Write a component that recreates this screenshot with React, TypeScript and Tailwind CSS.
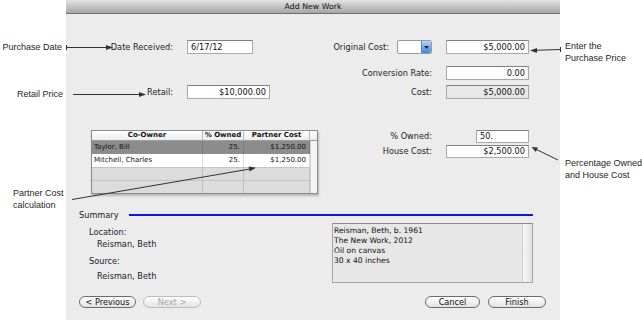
const ui = "font-['DejaVu_Sans',sans-serif]";
const note = "font-['Liberation_Sans',Arial,sans-serif] text-[9px] leading-[12px] text-[#1e1e1e] whitespace-nowrap";

function Label({ children }: { children: React.ReactNode }) {
  return <div className="text-right text-[8.2px] leading-none text-[#1c1c1c]">{children}</div>;
}

function Field({
  value,
  w = "w-[83px]",
  h = "h-[14px]",
  left,
  muted,
  className = "",
}: {
  value: string;
  w?: string;
  h?: string;
  left?: boolean;
  muted?: boolean;
  className?: string;
}) {
  return (
    <div
      className={`${w} ${h} ${className} flex items-center border border-[#a8a8a8] border-t-[#7f7f7f] px-[3px] text-[8.2px] leading-none text-[#111] ${
        muted ? "bg-[#e8e8e8]" : "bg-white"
      } ${left ? "justify-start" : "justify-end"}`}
    >
      {value}
    </div>
  );
}

function Popup() {
  return (
    <div className="flex h-[14px] w-[35px] overflow-hidden rounded-[2px] border border-[#9a9a9a] bg-white">
      <div className="flex-1" />
      <div className="flex w-[10px] items-center justify-center rounded-r-[2px] border-l border-[#5a82c0] bg-linear-to-b from-[#b3d3fa] to-[#3f84e4]">
        <svg width="5" height="3" viewBox="0 0 5 3">
          <path d="M0 0h5L2.5 3z" fill="#15233f" />
        </svg>
      </div>
    </div>
  );
}

function Btn({ children, w, disabled }: { children: React.ReactNode; w: string; disabled?: boolean }) {
  return (
    <div
      className={`${w} flex h-[12px] items-center justify-center rounded-full border bg-linear-to-b from-white to-[#e2e2e2] text-[8.2px] leading-none ${
        disabled ? "border-[#bdbdbd] text-[#a8a8a8]" : "border-[#6c6c6c] text-[#111]"
      }`}
    >
      {children}
    </div>
  );
}

const owners = [
  { name: "Taylor, Bill", owned: "25.", cost: "$1,250.00" },
  { name: "Mitchell, Charles", owned: "25.", cost: "$1,250.00" },
];

function Table() {
  return (
    <div className="ml-[25px] mt-[31px] w-[227px] border border-[#8a8a8a] bg-[#dcdcdc] text-[7px] leading-none text-[#111] shadow-[1px_2px_2px_rgba(0,0,0,0.22)]">
      <div className="flex h-[10px] border-b border-[#a0a0a0] bg-linear-to-b from-white to-[#ebebeb] font-bold">
        <div className="flex w-[111px] items-center justify-center border-r border-[#b8b8b8]">Co-Owner</div>
        <div className="flex w-[41px] items-center justify-center border-r border-[#b8b8b8]">% Owned</div>
        <div className="flex w-[66px] items-center justify-center border-r border-[#b8b8b8]">Partner Cost</div>
        <div className="flex-1" />
      </div>
      <div className="flex">
        <div className="w-[218px]">
          {owners.map((o, i) => (
            <div key={o.name} className={`flex h-[13px] ${i === 0 ? "bg-[#8c8c8c]" : "bg-white"}`}>
              <div className={`flex w-[111px] items-center pl-[2px] border-r ${i === 0 ? "border-[#7c7c7c]" : "border-[#dadada]"}`}>
                {o.name}
              </div>
              <div className={`flex w-[41px] items-center justify-end pr-[3px] border-r ${i === 0 ? "border-[#7c7c7c]" : "border-[#dadada]"}`}>
                {o.owned}
              </div>
              <div className={`flex w-[66px] items-center justify-end pr-[3px] border-r ${i === 0 ? "border-[#7c7c7c]" : "border-[#dadada]"}`}>
                {o.cost}
              </div>
            </div>
          ))}
          {[0, 1].map((k) => (
            <div key={k} className="flex h-[13px] border-t border-[#c4c4c4] bg-[#dcdcdc]">
              <div className="w-[111px] border-r border-[#c0c0c0]" />
              <div className="w-[41px] border-r border-[#c0c0c0]" />
              <div className="w-[66px] border-r border-[#c0c0c0]" />
            </div>
          ))}
        </div>
        <div className="flex-1 border-l border-[#cfcfcf] bg-[#f5f5f5]" />
      </div>
    </div>
  );
}

function Arrows() {
  const c = "#333";
  return (
    <svg className="pointer-events-none absolute left-0 top-0" width="642" height="320" viewBox="0 0 642 320">
      <g stroke={c} strokeWidth="1" fill="none">
        <path d="M66.5 45v5M66.5 47.5H108" />
        <path d="M73 94.5H140" />
        <path d="M560.5 47v5M560 49.5L536 50.3" />
        <path d="M558 160L536.5 149.5" />
        <path d="M72 199.5L250 169" />
      </g>
      <g fill={c}>
        <polygon points="113,47.5 106,45 106,50" />
        <polygon points="146,94.5 139,92 139,97" />
        <polygon points="530,50.5 537,48 537,53" />
        <polygon points="531.5,147 538,147.4 535.8,151.9" />
        <polygon points="256,167.7 249.5,171.4 248.7,166.4" />
      </g>
    </svg>
  );
}

export default function App() {
  return (
    <div className={`relative flex h-[320px] w-[642px] overflow-hidden bg-white ${ui}`}>
      <div className={`w-[66px] ${note}`}>
        <div className="mt-[41px] pr-[4px] text-right">Purchase Date</div>
        <div className="mt-[35px] pr-[3px] text-right">Retail Price</div>
        <div className="ml-[13px] mt-[87px]">
          <div>Partner Cost</div>
          <div>calculation</div>
        </div>
      </div>

      <div className="flex w-[494px] flex-col bg-[#ececec]">
        <div className="flex h-[14px] items-center justify-center border-b border-[#6e6e6e] bg-linear-to-b from-[#e4e4e4] to-[#a6a6a6] text-[7.8px] leading-none text-[#111]">
          Add New Work
        </div>

        <div className="flex h-[182px]">
          <div className="w-[260px] pt-[26px]">
            <div className="grid grid-cols-[107px_auto] items-center gap-x-[14px]">
              <Label>Date Received:</Label>
              <Field value="6/17/12" w="w-[66px]" left />
            </div>
            <div className="mt-[31px] grid grid-cols-[107px_auto] items-center gap-x-[14px]">
              <Label>Retail:</Label>
              <Field value="$10,000.00" />
            </div>
            <Table />
          </div>

          <div className="flex-1 pt-[26px]">
            <div className="grid grid-cols-[106px_83px] items-center gap-x-[14px]">
              <div className="flex items-center justify-end gap-[8px]">
                <Label>Original Cost:</Label>
                <Popup />
              </div>
              <Field value="$5,000.00" />
            </div>
            <div className="mt-[12px] grid grid-cols-[106px_83px] items-center gap-x-[14px]">
              <Label>Conversion Rate:</Label>
              <Field value="0.00" />
            </div>
            <div className="mt-[5px] grid grid-cols-[106px_83px] items-center gap-x-[14px]">
              <Label>Cost:</Label>
              <Field value="$5,000.00" muted />
            </div>
            <div className="mt-[31px] grid grid-cols-[106px_83px] items-center gap-x-[14px]">
              <Label>% Owned:</Label>
              <Field value="50." w="w-[53px]" h="h-[13px]" left className="justify-self-end" />
            </div>
            <div className="mt-[2px] grid grid-cols-[106px_83px] items-center gap-x-[14px]">
              <Label>House Cost:</Label>
              <Field value="$2,500.00" h="h-[13px]" />
            </div>
          </div>
        </div>

        <div className="mt-[13px] flex h-[12px] items-center pl-[13px] pr-[27px]">
          <span className="text-[8.2px] leading-none text-[#1c1c1c]">Summary</span>
          <div className="ml-[10px] h-[2px] flex-1 bg-[#1414e0]" />
        </div>

        <div className="mt-[2px] flex h-[60px] pr-[27px] text-[8.2px] leading-[10px] text-[#1c1c1c]">
          <div className="pl-[23px] pt-[4px]">
            <div>Location:</div>
            <div className="mt-[2px] pl-[8px]">Reisman, Beth</div>
            <div className="mt-[7px]">Source:</div>
            <div className="mt-[5px] pl-[8px]">Reisman, Beth</div>
          </div>
          <div className="ml-auto flex w-[201px] border border-[#a4a4a4] border-t-[#8a8a8a] bg-[#e7e7e7]">
            <div className="flex-1 pl-[1px] pt-[2px] text-[7.6px] leading-[10px] text-[#111]">
              <div>Reisman, Beth, b. 1961</div>
              <div>The New Work, 2012</div>
              <div>Oil on canvas</div>
              <div>30 x 40 inches</div>
            </div>
            <div className="w-[10px] border-l border-[#c9c9c9] bg-linear-to-r from-[#f7f7f7] to-[#e2e2e2]" />
          </div>
        </div>

        <div className="mt-[13px] flex items-center pl-[13px] pr-[14px]">
          <Btn w="w-[57px]">&lt; Previous</Btn>
          <div className="ml-[7px]">
            <Btn w="w-[58px]" disabled>
              Next &gt;
            </Btn>
          </div>
          <div className="ml-auto flex gap-[8px]">
            <Btn w="w-[55px]">Cancel</Btn>
            <Btn w="w-[58px]">Finish</Btn>
          </div>
        </div>
      </div>

      <div className={`w-[82px] pl-[5px] ${note}`}>
        <div className="mt-[40px]">
          <div>Enter the</div>
          <div>Purchase Price</div>
        </div>
        <div className="mt-[93px]">
          <div>Percentage Owned</div>
          <div>and House Cost</div>
        </div>
      </div>

      <Arrows />
    </div>
  );
}
